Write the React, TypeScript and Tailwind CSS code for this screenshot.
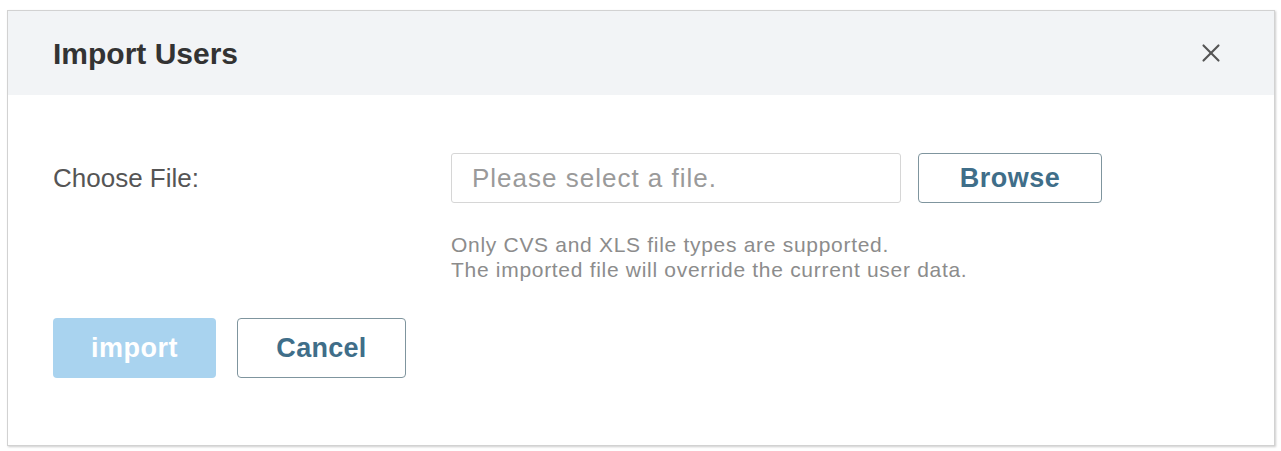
import { X } from "lucide-react";

export default function App() {
  return (
    <div className="w-[1281px] h-[451px] bg-white pt-[10px] pl-[7px] font-['Liberation_Sans',Arial,sans-serif]">
      <div className="w-[1268px] h-[436px] border border-[#d2d2d2] shadow-[1px_1px_2px_rgba(0,0,0,0.2)] bg-white flex flex-col">
        {/* header */}
        <div className="h-[84px] bg-[#f2f4f6] flex items-center justify-between pl-[45px] pr-[48px]">
          <h2 className="text-[30px] font-bold text-[#333]">Import Users</h2>
          <button className="text-[#555]">
            <X className="w-[30px] h-[30px]" strokeWidth={1.7} />
          </button>
        </div>

        {/* body */}
        <div className="px-[45px] pt-[58px]">
          <div className="flex items-center">
            <label className="w-[398px] text-[26px] text-[#555]">Choose File:</label>
            <div className="w-[450px] h-[50px] border border-[#d6d6d6] rounded-[3px] flex items-center pl-[20px] text-[26px] tracking-[1px] text-[#9a9a9a]">
              Please select a file.
            </div>
            <button className="ml-[17px] w-[184px] h-[50px] border border-[#7f959e] rounded-[4px] bg-white text-[27px] tracking-[0.5px] font-bold text-[#3f6e89]">
              Browse
            </button>
          </div>

          <div className="ml-[398px] mt-[29px] text-[21px] leading-[25px] tracking-[0.7px] text-[#8c8c8c]">
            <p>Only CVS and XLS file types are supported.</p>
            <p>The imported file will override the current user data.</p>
          </div>

          <div className="mt-[36px] flex gap-[21px]">
            <button className="w-[163px] h-[60px] rounded-[4px] bg-[#a9d3ef] text-[27px] tracking-[0.5px] font-bold text-white">
              import
            </button>
            <button className="w-[169px] h-[60px] rounded-[4px] border border-[#7f959e] bg-white text-[27px] tracking-[0.3px] font-bold text-[#3f6e89]">
              Cancel
            </button>
          </div>
        </div>
      </div>
    </div>
  );
}
